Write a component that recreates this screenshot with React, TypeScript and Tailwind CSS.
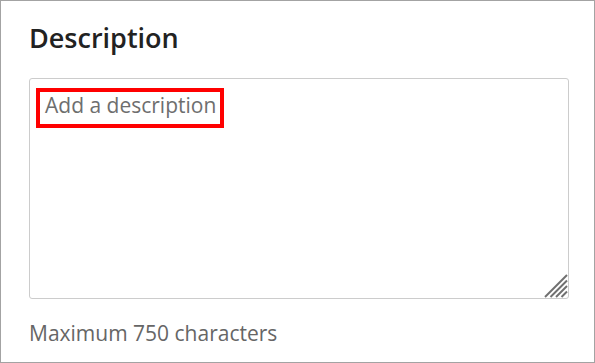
export default function App() {
  return (
    <div
      className="w-[595px] h-[363px] border border-[#a3a3a3] bg-white pl-[28px] pt-[21px]"
      style={{ fontFamily: '"Open Sans", sans-serif' }}
    >
      <h2 className="text-[27px] leading-8 font-semibold text-[#222222]">Description</h2>
      <div className="relative mt-[24px] w-[540px]">
        <textarea
          className="block w-[540px] h-[221px] resize-none rounded-[3px] border border-[#cccccc] bg-white pl-[15px] pr-3 pt-[12px] text-[21px] leading-7 text-[#333] placeholder:text-[#6e6e6e] outline-none"
          style={{ fontFamily: '"Open Sans", sans-serif' }}
          placeholder="Add a description"
        />
        {/* resize grip */}
        <svg
          className="pointer-events-none absolute right-[1px] bottom-[1px]"
          width="26"
          height="26"
          viewBox="0 0 26 26"
        >
          <g stroke="#707070" strokeWidth="2">
            <line x1="3" y1="25" x2="25" y2="3" />
            <line x1="8.5" y1="25" x2="25" y2="8.5" />
            <line x1="14" y1="25" x2="25" y2="14" />
            <line x1="19.5" y1="25" x2="25" y2="19.5" />
          </g>
        </svg>
        <div className="pointer-events-none absolute left-[7px] top-[10px] h-[40px] w-[188px] border-4 border-[#ff0000]" />
      </div>
      <p className="mt-[20px] text-[21px] leading-7 text-[#666666]">Maximum 750 characters</p>
    </div>
  );
}
